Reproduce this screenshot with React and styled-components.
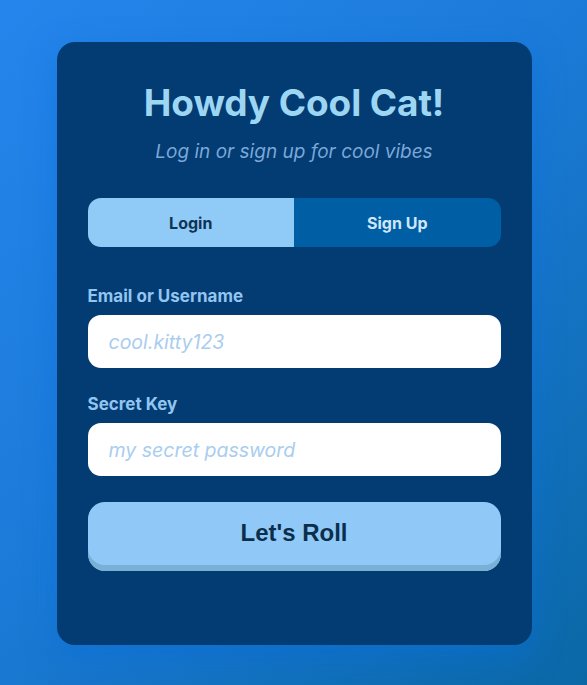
import React from "react";
import styled, { createGlobalStyle } from "styled-components";

const Global = createGlobalStyle`
  html, body { margin: 0; padding: 0; }
  body {
    font-family: "Inter", "Noto Sans", sans-serif;
  }
  * { box-sizing: border-box; }
`;

const Page = styled.div`
  width: 587px;
  height: 685px;
  background: linear-gradient(135deg, #2585ec 0%, #1c7bd9 45%, #0a68a6 100%);
  display: flex;
  justify-content: center;
  padding: 42px 0 0 1px;
`;

const Card = styled.div`
  width: 475px;
  height: 603px;
  background: #033b73;
  border-radius: 18px;
  padding: 38px 31px 0;
  display: flex;
  flex-direction: column;
  box-shadow: 0 10px 30px rgba(10, 110, 220, 0.55);
`;

const Title = styled.h1`
  margin: 0;
  text-align: center;
  font-size: 37px;
  font-weight: 700;
  line-height: 46px;
  letter-spacing: -0.1px;
  color: #9dd6f2;
`;

const Subtitle = styled.p`
  margin: 15px 0 0;
  text-align: center;
  font-size: 19px;
  font-style: italic;
  line-height: 22px;
  color: #7aa8d8;
`;

const Toggle = styled.div`
  margin-top: 35px;
  display: grid;
  grid-template-columns: 1fr 1fr;
  height: 49px;
  border-radius: 13px;
  overflow: hidden;
`;

const Tab = styled.button`
  border: none;
  margin: 0;
  font-family: "Inter", "Noto Sans", sans-serif;
  font-size: 16px;
  font-weight: 700;
  cursor: pointer;
  background: ${(p) => (p.$active ? "#90caf7" : "#005ea5")};
  color: ${(p) => (p.$active ? "#0e3454" : "#cfe6fb")};
`;

const Label = styled.label`
  display: block;
  margin-top: ${(p) => p.$top}px;
  font-size: 17px;
  font-weight: 700;
  line-height: 19px;
  color: #92c6f0;
`;

const Input = styled.input`
  display: block;
  width: 100%;
  height: 53px;
  margin-top: 9px;
  border: none;
  border-radius: 13px;
  background: #fff;
  padding: 0 21px;
  font-family: "Inter", "Noto Sans", sans-serif;
  font-size: 19.5px;
  font-style: italic;
  outline: none;
  &::placeholder {
    color: #a9cdef;
  }
`;

const Submit = styled.button`
  margin-top: 26px;
  height: 69px;
  width: 100%;
  border: none;
  border-radius: 17px;
  background: #90c9f7;
  box-shadow: inset 0 -6px 0 #79b0d6;
  padding-bottom: 8px;
  font-family: "Liberation Sans", Arial, sans-serif;
  font-size: 24px;
  font-weight: 700;
  color: #0b2f4b;
  cursor: pointer;
`;

export default function App() {
  return (
    <>
      <Global />
      <Page>
        <Card>
          <Title>Howdy Cool Cat!</Title>
          <Subtitle>Log in or sign up for cool vibes</Subtitle>
          <Toggle>
            <Tab $active>Login</Tab>
            <Tab>Sign Up</Tab>
          </Toggle>
          <Label $top={40}>Email or Username</Label>
          <Input placeholder="cool.kitty123" />
          <Label $top={27}>Secret Key</Label>
          <Input type="password" placeholder="my secret password" />
          <Submit>Let's Roll</Submit>
        </Card>
      </Page>
    </>
  );
}
